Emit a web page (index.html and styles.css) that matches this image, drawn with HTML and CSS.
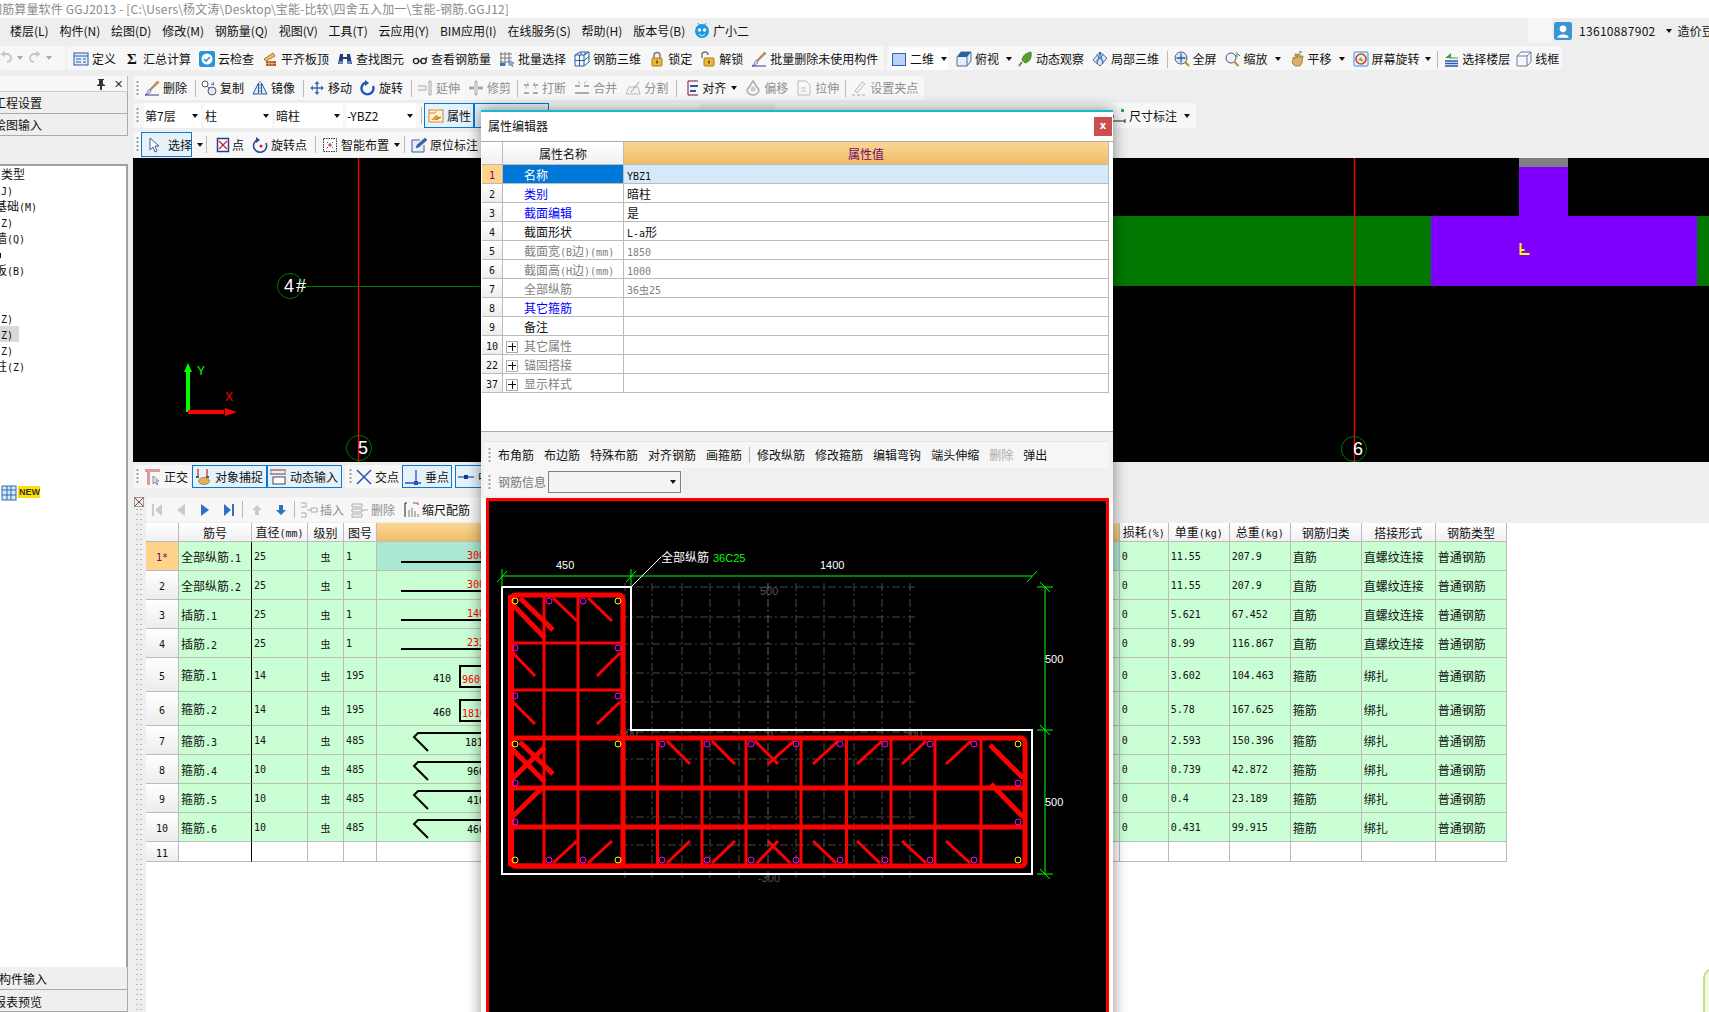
FILE: index.html
```html
<!DOCTYPE html>
<html lang="zh-CN">
<head>
<meta charset="utf-8">
<title>钢筋算量软件 GGJ2013</title>
<link rel="stylesheet" href="styles.css">
</head>
<body>
<svg class="defs" aria-hidden="true">
<symbol id="i-def" viewBox="0 0 16 16"><rect x="1" y="2" width="14" height="12" fill="#e3ecf8" stroke="#2b5c9e"/><path d="M1 5h14M3 8h5M3 11h5M10 8h3M10 11h3" stroke="#2b5c9e" fill="none"/></symbol>
<symbol id="i-cloud" viewBox="0 0 16 16"><rect x="0" y="0" width="16" height="16" rx="2" fill="#2a93dc"/><circle cx="8" cy="8" r="5.5" fill="#fff"/><path d="M5 8l2 2 4-4" stroke="#2a93dc" stroke-width="1.6" fill="none"/></symbol>
<symbol id="i-flat" viewBox="0 0 16 16"><path d="M2 8l9-6 2 3-9 5z" fill="#f3c93b" stroke="#555" stroke-width=".7"/><rect x="4" y="10" width="10" height="5" fill="#c0562a"/><path d="M4 12.5h10M7 10v5M10 10v5" stroke="#f3d4a0" stroke-width=".6"/></symbol>
<symbol id="i-bino" viewBox="0 0 16 16"><path d="M3 3h3v3h4V3h3l2 10h-5V8H6v5H1z" fill="#1f3f75"/><rect x="2" y="10" width="4" height="3" fill="#5d85bf"/><rect x="10" y="10" width="4" height="3" fill="#5d85bf"/></symbol>
<symbol id="i-glass" viewBox="0 0 16 16"><circle cx="4" cy="10" r="2.6" fill="none" stroke="#222" stroke-width="1.4"/><circle cx="11.5" cy="10" r="2.6" fill="none" stroke="#222" stroke-width="1.4"/><path d="M6.5 10h2.5M14 9l1-3" stroke="#222" fill="none"/></symbol>
<symbol id="i-bsel" viewBox="0 0 16 16"><path d="M2 1v14M6 1v14M10 1v11M1 3h12M1 7h12M1 11h9" stroke="#777" fill="none"/><rect x="1" y="12" width="5" height="3" fill="#3b74c4"/><path d="M10 9l5 3-2 1 1 2-1 .5-1-2-2 1z" fill="#8fb0da" stroke="#3b5f96" stroke-width=".5"/></symbol>
<symbol id="i-rebar" viewBox="0 0 16 16"><path d="M1 4l5-3h9v10l-5 4H1zM1 4h9v11M10 4l5-3M1 9.5h9M5.500 4v11M10 9.500l5-4M7 1v3M11 1v3" stroke="#2a5da8" fill="none"/></symbol>
<symbol id="i-lock" viewBox="0 0 16 16"><path d="M5 7V4.500a3 3 0 016 0V7" stroke="#777" stroke-width="1.500" fill="none"/><rect x="3" y="7" width="10" height="8" rx="1" fill="#e8b83a" stroke="#a87d14"/><rect x="7" y="9.500" width="2" height="3" fill="#7a5b10"/></symbol>
<symbol id="i-unlock" viewBox="0 0 16 16"><path d="M2 7V4a3 3 0 016 0" stroke="#777" stroke-width="1.500" fill="none"/><rect x="4" y="7" width="10" height="8" rx="1" fill="#e8b83a" stroke="#a87d14"/><rect x="8" y="9.500" width="2" height="3" fill="#7a5b10"/></symbol>
<symbol id="i-broom" viewBox="0 0 16 16"><path d="M13.500 1L15 2.500 7 10 6 9z" fill="#c99645" stroke="#7a5a20" stroke-width=".5"/><path d="M6 9l1 1.500C6.500 13 4 15 1 15c2-1 2.500-3 3-4.500z" fill="#d9d4ee" stroke="#5a4fa8" stroke-width=".7"/><path d="M1 15h14" stroke="#3a3a8a"/></symbol>
<symbol id="i-copy" viewBox="0 0 16 16"><circle cx="4" cy="4" r="3" fill="#fff" stroke="#556"/><circle cx="11" cy="11" r="4" fill="#dfe8f5" stroke="#556"/><path d="M6 6l3 3M12 2l1 3-3-1" stroke="#3b74c4" fill="none"/></symbol>
<symbol id="i-mirror" viewBox="0 0 16 16"><path d="M8 1v14" stroke="#3b74c4" stroke-dasharray="2 1"/><path d="M6.500 3v11H1zM9.500 3v11H15z" fill="#dfe8f5" stroke="#2b5c9e"/></symbol>
<symbol id="i-move" viewBox="0 0 16 16"><path d="M8 1l2.500 3h-1.800v3.300H12V5.500L15 8l-3 2.500V8.700H8.700V12h1.800L8 15l-2.500-3h1.800V8.700H4v1.800L1 8l3-2.500v1.800h3.300V4H5.500z" fill="#356cb8"/></symbol>
<symbol id="i-rot" viewBox="0 0 16 16"><path d="M6 2.500A6 6 0 1013 6" stroke="#2456b8" stroke-width="2.400" fill="none"/><path d="M5 0v6l4-3z" fill="#2456b8"/></symbol>
<symbol id="i-ext" viewBox="0 0 16 16"><path d="M1 6h8v4H1M12 1h2v14h-2z" stroke="#aaa" fill="#f3f3f3"/></symbol>
<symbol id="i-trim" viewBox="0 0 16 16"><path d="M1 8h5M10 8h5" stroke="#aaa" stroke-width="3"/><path d="M7 1h2v14H7z" stroke="#aaa" fill="#f3f3f3"/></symbol>
<symbol id="i-brk" viewBox="0 0 16 16"><path d="M1 13h5M10 13h5M1 5h5M10 5h5" stroke="#aaa" stroke-width="2"/><path d="M5 2L3 9M11 2l2 7" stroke="#bbb"/></symbol>
<symbol id="i-mrg" viewBox="0 0 16 16"><path d="M1 13h14M1 6h5M10 6h5" stroke="#aaa" stroke-width="2"/><path d="M4 1l2 3M12 1l-2 3" stroke="#bbb"/></symbol>
<symbol id="i-spl" viewBox="0 0 16 16"><path d="M1 14h14L13 7H4z" fill="#f3f3f3" stroke="#bbb"/><path d="M6 12l8-10" stroke="#999"/></symbol>
<symbol id="i-align" viewBox="0 0 16 16"><path d="M3 1v14M3 15h10M3 1h10" stroke="#7a1030" fill="none"/><path d="M5 5h8v2H5zM5 10h6v2H5z" fill="#2456b8"/></symbol>
<symbol id="i-off" viewBox="0 0 16 16"><path d="M8 1l6 9a6 5 0 01-12 0z" fill="none" stroke="#aaa" stroke-width="1.500"/><circle cx="8" cy="9" r="2.500" fill="#ccc"/></symbol>
<symbol id="i-str" viewBox="0 0 16 16"><path d="M2 1h8l4 4v10H2z" fill="#f8f8f8" stroke="#bbb"/><path d="M5 8h5M5 11h5" stroke="#bbb"/></symbol>
<symbol id="i-grip" viewBox="0 0 16 16"><path d="M1 15h3M6 15h3M11 15h3" stroke="#aaa"/><path d="M4 11L11 2l3 2-8 9z" fill="#f2f2f2" stroke="#bbb"/></symbol>
<symbol id="i-attr" viewBox="0 0 16 16"><rect x="1" y="2" width="14" height="12" fill="#fff4d8" stroke="#d8862a"/><path d="M1 5h6l1-2" stroke="#d8862a" fill="none"/><path d="M3 12l5-5 4 2-5 3z" fill="#d8a028"/><path d="M8 12l5-3" stroke="#8b5a10"/></symbol>
<symbol id="i-cur" viewBox="0 0 16 16"><path d="M4 1v12l3-3 2 5 2-1-2-5h4z" fill="#fff" stroke="#3b5f96"/></symbol>
<symbol id="i-pt" viewBox="0 0 16 16"><rect x="2.500" y="1.500" width="11" height="13" fill="#fff" stroke="#243f9a" stroke-width="1.500"/><path d="M4 4l8 8M12 4l-8 8" stroke="#c8242c" stroke-width="1.300"/></symbol>
<symbol id="i-rpt" viewBox="0 0 16 16"><path d="M5 3a6.500 6.500 0 109 3" stroke="#2b4c96" stroke-width="1.600" fill="none"/><path d="M4 0v6l4-3z" fill="#2b4c96"/><circle cx="9" cy="9" r="1.500" fill="#c8242c"/></symbol>
<symbol id="i-smart" viewBox="0 0 16 16"><rect x="1.500" y="1.500" width="13" height="13" fill="#fff" stroke="#333" stroke-dasharray="1.500 1"/><path d="M5 5h1v1H5zM10 5h1v1h-1zM5 10h1v1H5zM10 10h1v1h-1z" fill="#2456b8"/><path d="M8 6v4M6 8h4" stroke="#c8242c"/></symbol>
<symbol id="i-pen" viewBox="0 0 16 16"><path d="M1 15V3h8M1 15h12V8" stroke="#3b5f96" fill="#e8eef8"/><path d="M5 11l1-3 8-7 2 2-8 7z" fill="#3566ae" stroke="#1f3f75" stroke-width=".5"/></symbol>
<symbol id="i-2d" viewBox="0 0 16 16"><rect x="1.500" y="2.500" width="13" height="12" fill="#b9d3f4" stroke="#2f62b0"/></symbol>
<symbol id="i-top" viewBox="0 0 16 16"><path d="M1 6l4-5h10v9l-4 5H1z" fill="#e6eef8" stroke="#4a6c9e"/><path d="M1 6h10l4-5H5z" fill="#2e5f9e"/><path d="M11 6v9" stroke="#4a6c9e"/></symbol>
<symbol id="i-orb" viewBox="0 0 16 16"><path d="M14 1c1 5-1 10-6 11L5 9c1-5 4-7 9-8z" fill="#4fa62a" stroke="#2b6b12" stroke-width=".7"/><path d="M5 11l-3 4" stroke="#777" stroke-width="2"/></symbol>
<symbol id="i-local" viewBox="0 0 16 16"><path d="M8 1l7 6-7 8-7-6zM4.500 4l7 6.500M11.500 3.500L4 10.500M8 1L5 13M8 1l3 12" stroke="#2f62b0" fill="#dce7f6" stroke-width=".9"/></symbol>
<symbol id="i-full" viewBox="0 0 16 16"><circle cx="7" cy="7" r="6" fill="#dfe8f5" stroke="#556"/><path d="M7 2.500V11.500M2.500 7H11.500" stroke="#2456b8" stroke-width="1.300"/><path d="M11 11l4 4" stroke="#c08a20" stroke-width="2"/></symbol>
<symbol id="i-zoom" viewBox="0 0 16 16"><circle cx="6" cy="7" r="5" fill="#eef3fa" stroke="#556"/><path d="M9.500 11l4 4" stroke="#c08a20" stroke-width="2"/><path d="M12 1v5M13 3l2 2" stroke="#3a7a3a"/></symbol>
<symbol id="i-pan" viewBox="0 0 16 16"><path d="M4 8V6l2 2V3h2v4l1-4h2v4l1-2h2l-1 7-2 3H6L3 12z" fill="#d9b26a" stroke="#8b6a25" stroke-width=".7"/><path d="M10 1h3" stroke="#2456b8"/></symbol>
<symbol id="i-srot" viewBox="0 0 16 16"><rect x="1" y="1" width="14" height="14" rx="1" fill="#eef3fa" stroke="#2a93dc"/><circle cx="8" cy="8" r="5" fill="none" stroke="#d83a2a" stroke-width="1.600"/><path d="M5 9l3-3 3 5z" fill="#7cb342"/></symbol>
<symbol id="i-floor" viewBox="0 0 16 16"><path d="M2 7l6-5v5z" fill="#3aa14a"/><path d="M6 7h9" stroke="#3aa14a"/><path d="M2 10h13M2 12.500h13M2 15h13" stroke="#2456b8" stroke-width="1.300"/></symbol>
<symbol id="i-wire" viewBox="0 0 16 16"><path d="M1 5l4-4h10v10l-4 4H1zM1 5h10v10M11 5l4-4" stroke="#6a7d99" fill="#f4f7fb"/></symbol>
<symbol id="i-dim" viewBox="0 0 16 16"><path d="M1 13h14M1 11v4M15 11v4" stroke="#222" fill="none"/><rect x="11" y="1" width="3" height="3" fill="#3aa14a"/><rect x="1" y="7" width="3" height="3" fill="#3aa14a"/></symbol>
<symbol id="i-ortho" viewBox="0 0 16 16"><path d="M0 0h15v3H5v13H2V3H0z" fill="#dd9c9c"/><path d="M8 7v8l2-2 2 3 1-1-2-3h3z" fill="#dfe8f5" stroke="#5a6a80" stroke-width=".7"/></symbol>
<symbol id="i-snap" viewBox="0 0 16 16"><path d="M3 0v7M12 0v7" stroke="#c0392b" stroke-width="1.300"/><path d="M1 8h3M11 8h3" stroke="#555" stroke-width="2"/><ellipse cx="9" cy="12" rx="5.500" ry="3.500" fill="#dcb25a" stroke="#946f20" stroke-width=".7"/></symbol>
<symbol id="i-dyn" viewBox="0 0 16 16"><path d="M0 1h16M0 5h16" stroke="#8a3030" fill="none"/><path d="M1 1v4M15 1v4" stroke="#999"/><rect x="3" y="8" width="12" height="7" fill="#fff" stroke="#444"/></symbol>
<symbol id="i-cross" viewBox="0 0 16 16"><path d="M1 1l14 14M15 1L1 15" stroke="#2456b8" stroke-width="1.500"/></symbol>
<symbol id="i-perp" viewBox="0 0 16 16"><path d="M0 14h16M11 1v13" stroke="#2456b8" stroke-width="1.300"/><rect x="9" y="12" width="4" height="4" fill="#2456b8"/></symbol>
<symbol id="i-mid" viewBox="0 0 16 16"><path d="M0 8h16" stroke="#2456b8" stroke-width="1.300"/><rect x="6" y="6" width="4" height="4" fill="#123a8a"/></symbol>
<symbol id="i-first" viewBox="0 0 14 16"><path d="M2 2h2v12H2zM12 2v12L5 8z" fill="#c8ccd2"/></symbol>
<symbol id="i-prev" viewBox="0 0 14 16"><path d="M11 2v12L3 8z" fill="#c8ccd2"/></symbol>
<symbol id="i-next" viewBox="0 0 14 16"><path d="M3 2v12l8-6z" fill="#2f6fc4"/></symbol>
<symbol id="i-last" viewBox="0 0 14 16"><path d="M10 2h2v12h-2zM2 2v12l7-6z" fill="#2f6fc4"/></symbol>
<symbol id="i-up" viewBox="0 0 14 16"><path d="M7 3l5 5H9v5H5V8H2z" fill="#c8ccd2"/></symbol>
<symbol id="i-down" viewBox="0 0 14 16"><path d="M5 3h4v5h3l-5 5-5-5h3z" fill="#2f6fc4"/></symbol>
<symbol id="i-ins" viewBox="0 0 18 16"><path d="M1 1h5v4H1M1 11h5v4H1M7 8h4M11 6v4h6V6z" stroke="#aaa" fill="none"/></symbol>
<symbol id="i-del" viewBox="0 0 18 16"><path d="M1 2h10v3H1zM1 7h10v3H1zM1 12h10v3H1z" stroke="#aaa" fill="#f4f4f4"/><path d="M12 8h5" stroke="#aaa"/></symbol>
<symbol id="i-scale" viewBox="0 0 16 16"><path d="M1 1h2M1 1v14" stroke="#222" fill="none"/><path d="M9 1h5v2" stroke="#c0392b" fill="none"/><path d="M5 15V8M8 15V6M11 15V9M14 15v-3" stroke="#777"/></symbol>
<symbol id="i-grid" viewBox="0 0 16 16"><rect x="1" y="1" width="14" height="14" fill="#d8e8fa" stroke="#2b6cb0"/><path d="M6 1v14M10 1v14M1 5h14M1 10h14" stroke="#2b6cb0" fill="none"/></symbol>
<symbol id="i-user" viewBox="0 0 16 16"><rect width="16" height="16" rx="2" fill="#3a97d4"/><circle cx="8" cy="6" r="3" fill="#fff"/><path d="M3 14c0-4 10-4 10 0z" fill="#fff"/></symbol>
<symbol id="i-bot" viewBox="0 0 18 18"><circle cx="9" cy="9" r="7" fill="#1d9ae0"/><circle cx="6.500" cy="8" r="1.700" fill="#fff"/><circle cx="11.500" cy="8" r="1.700" fill="#fff"/><path d="M6 12c2 2 4 2 6 0" stroke="#fff" fill="none"/><path d="M5 1l2 3M13 1l-2 3" stroke="#1d9ae0"/></symbol>
<symbol id="i-undo" viewBox="0 0 12 16"><path d="M3 4h4a3 3 0 010 8" stroke="#c8c8c8" stroke-width="2" fill="none"/><path d="M5 1v6L0 4z" fill="#c8c8c8"/></symbol>
<symbol id="i-redo" viewBox="0 0 12 16"><path d="M9 4H5a3 3 0 000 8" stroke="#c8c8c8" stroke-width="2" fill="none"/><path d="M7 1v6l5-3z" fill="#c8c8c8"/></symbol>
<symbol id="i-pin" viewBox="0 0 10 12"><path d="M2 1h6v1H7v4l2 1v1H6v4H4V8H1V7l2-1V2H2z" fill="#333"/></symbol>
</svg>

<header class="titlebar"><span class="titletext">钢筋算量软件 GGJ2013 - [C:\Users\杨文涛\Desktop\宝能-比较\四舍五入加一\宝能-钢筋.GGJ12]</span></header>

<nav class="menubar">
  <span class="menuitem">楼层(L)</span><span class="menuitem">构件(N)</span><span class="menuitem">绘图(D)</span><span class="menuitem">修改(M)</span><span class="menuitem">钢筋量(Q)</span><span class="menuitem">视图(V)</span><span class="menuitem">工具(T)</span><span class="menuitem">云应用(Y)</span><span class="menuitem">BIM应用(I)</span><span class="menuitem">在线服务(S)</span><span class="menuitem">帮助(H)</span><span class="menuitem">版本号(B)</span>
  <span class="menuitem assistant"><svg class="ic18"><use href="#i-bot"/></svg>广小二</span>
  <span class="menuright"><span class="lightbox"></span><svg class="ic18"><use href="#i-user"/></svg><span class="phone">13610887902</span><i class="caret"></i><span class="beans">造价豆</span></span>
</nav>

<div class="row1">
  <div class="group g-undo"><svg class="ic12"><use href="#i-undo"/></svg><i class="caret pale"></i><svg class="ic12"><use href="#i-redo"/></svg><i class="caret pale"></i></div>
  <div class="group g-main">
    <span class="tb"><svg class="ic"><use href="#i-def"/></svg>定义</span>
    <span class="tb"><b class="sigma">Σ</b>汇总计算</span>
    <span class="tb"><svg class="ic"><use href="#i-cloud"/></svg>云检查</span>
    <span class="tb"><svg class="ic"><use href="#i-flat"/></svg>平齐板顶</span>
    <span class="tb"><svg class="ic"><use href="#i-bino"/></svg>查找图元</span>
    <span class="tb"><svg class="ic"><use href="#i-glass"/></svg>查看钢筋量</span>
    <span class="tb"><svg class="ic"><use href="#i-bsel"/></svg>批量选择</span>
    <span class="tb"><svg class="ic"><use href="#i-rebar"/></svg>钢筋三维</span>
    <span class="tb"><svg class="ic"><use href="#i-lock"/></svg>锁定</span>
    <span class="tb"><svg class="ic"><use href="#i-unlock"/></svg>解锁</span>
    <span class="tb"><svg class="ic"><use href="#i-broom"/></svg>批量删除未使用构件</span>
  </div>
  <div class="group g-view">
    <span class="tb tb-2d"><svg class="ic"><use href="#i-2d"/></svg>二维<i class="caret"></i></span>
    <span class="tb"><svg class="ic"><use href="#i-top"/></svg>俯视<i class="caret topview"></i></span>
    <span class="tb"><svg class="ic"><use href="#i-orb"/></svg>动态观察</span>
    <span class="tb"><svg class="ic"><use href="#i-local"/></svg>局部三维</span>
    <i class="sep"></i>
    <span class="tb"><svg class="ic"><use href="#i-full"/></svg>全屏</span>
    <span class="tb"><svg class="ic"><use href="#i-zoom"/></svg>缩放<i class="caret"></i></span>
    <span class="tb"><svg class="ic"><use href="#i-pan"/></svg>平移<i class="caret"></i></span>
    <span class="tb"><svg class="ic"><use href="#i-srot"/></svg>屏幕旋转<i class="caret near"></i></span>
    <i class="sep"></i>
    <span class="tb"><svg class="ic"><use href="#i-floor"/></svg>选择楼层</span>
    <span class="tb tb-wire"><svg class="ic"><use href="#i-wire"/></svg>线框</span>
  </div>
</div>

<div class="work">
  <aside class="left">
    <div class="paneltop"><svg class="pin"><use href="#i-pin"/></svg><span class="paneclose">✕</span></div>
    <div class="leftbtn"><span class="clip6">工程设置</span></div>
    <div class="leftbtn"><span class="clip6">绘图输入</span></div>
    <div class="tree">
      <div class="node first">类型</div>
      <div class="node"><span class="m">(J)</span></div>
      <div class="node">基础<span class="m">(M)</span></div>
      <div class="node"><span class="m">(Z)</span></div>
      <div class="node">墙<span class="m">(Q)</span></div>
      <div class="node"><i class="tick"></i></div>
      <div class="node">板<span class="m">(B)</span></div>
      <div class="node"></div>
      <div class="node"></div>
      <div class="node"><span class="m">(Z)</span></div>
      <div class="node active"><span class="m">(Z)</span></div>
      <div class="node"><span class="m">(Z)</span></div>
      <div class="node">柱<span class="m">(Z)</span></div>
      <div class="newrow"><svg class="ic"><use href="#i-grid"/></svg><span class="newtag">NEW</span></div>
    </div>
    <div class="leftbtn foot"><span class="clip1">构件输入</span></div>
    <div class="leftbtn foot"><span class="clip6">报表预览</span></div>
  </aside>

  <main class="right">
    <div class="row2"><div class="group g-edit">
      <i class="grip"></i>
      <span class="tb"><svg class="ic"><use href="#i-broom"/></svg>删除</span><i class="sep"></i>
      <span class="tb"><svg class="ic"><use href="#i-copy"/></svg>复制</span>
      <span class="tb"><svg class="ic"><use href="#i-mirror"/></svg>镜像</span><i class="sep"></i>
      <span class="tb"><svg class="ic"><use href="#i-move"/></svg>移动</span>
      <span class="tb"><svg class="ic"><use href="#i-rot"/></svg>旋转</span><i class="sep"></i>
      <span class="tb off"><svg class="ic"><use href="#i-ext"/></svg>延伸</span>
      <span class="tb off"><svg class="ic"><use href="#i-trim"/></svg>修剪</span><i class="sep tight"></i>
      <span class="tb off"><svg class="ic"><use href="#i-brk"/></svg>打断</span>
      <span class="tb off"><svg class="ic"><use href="#i-mrg"/></svg>合并</span>
      <span class="tb off"><svg class="ic"><use href="#i-spl"/></svg>分割</span><i class="sep"></i>
      <span class="tb gap-align"><svg class="ic"><use href="#i-align"/></svg>对齐<i class="caret"></i></span>
      <span class="tb off"><svg class="ic"><use href="#i-off"/></svg>偏移</span>
      <span class="tb off"><svg class="ic"><use href="#i-str"/></svg>拉伸</span><i class="sep tight"></i>
      <span class="tb off"><svg class="ic"><use href="#i-grip"/></svg>设置夹点</span>
    </div></div>

    <div class="row3">
      <div class="group g-combo">
        <i class="grip"></i>
        <span class="combo c1">第7层<i class="caret"></i></span>
        <span class="combo c2">柱<i class="caret"></i></span>
        <span class="combo c2">暗柱<i class="caret"></i></span>
        <span class="combo c3">-YBZ2<i class="caret"></i></span>
        <i class="sep"></i>
        <span class="tbtn"><svg class="ic"><use href="#i-attr"/></svg>属性</span>
        <span class="tbtn wide"></span>
      </div>
      <div class="group g-dim"><span class="tb"><svg class="ic"><use href="#i-dim"/></svg>尺寸标注<i class="caret"></i></span></div>
    </div>

    <div class="row4"><div class="group g-place">
      <i class="grip"></i>
      <span class="tbtn sel"><svg class="ic"><use href="#i-cur"/></svg>选择</span><i class="caret solo"></i><i class="sep"></i>
      <span class="tb tb-pt"><svg class="ic"><use href="#i-pt"/></svg>点</span>
      <span class="tb"><svg class="ic"><use href="#i-rpt"/></svg>旋转点</span><i class="sep"></i>
      <span class="tb"><svg class="ic"><use href="#i-smart"/></svg>智能布置<i class="caret smart"></i></span><i class="sep"></i>
      <span class="tb"><svg class="ic"><use href="#i-pen"/></svg>原位标注</span>
    </div></div>

    <svg class="cad" viewBox="133 158 1576 304">
      <rect x="133" y="158" width="1576" height="304" fill="#000"/>
      <rect x="1100" y="216" width="609" height="70" fill="#007800"/>
      <rect x="1431" y="216" width="266" height="70" fill="#8000ff"/>
      <rect x="1519" y="167" width="49" height="49" fill="#8000ff"/>
      <rect x="1519" y="158" width="49" height="9" fill="#808080"/>
      <path d="M1520.500 243v11h9M1520.500 250h4" stroke="#ff0" stroke-width="2" fill="none"/>
      <path d="M302 286.500H1100" stroke="#007800"/>
      <path d="M358.500 158V462M1354.500 158V462" stroke="#f00" stroke-width="1.300"/>
      <circle cx="290" cy="286" r="12.500" fill="none" stroke="#007800"/>
      <circle cx="359" cy="448" r="12.500" fill="none" stroke="#007800"/>
      <circle cx="1354" cy="449" r="12.500" fill="none" stroke="#007800"/>
      <text class="axisnum" x="284" y="292">4</text><text class="axisnum" x="296" y="292">#</text>
      <text class="axisnum" x="358" y="454">5</text>
      <text class="axisnum" x="1353" y="455">6</text>
      <path d="M188 412V368" stroke="#0f0" stroke-width="4"/><path d="M188 363l4 9h-8z" fill="#0f0"/>
      <path d="M188 412h36" stroke="#f00" stroke-width="4"/><path d="M237 412l-12-4v8z" fill="#f00"/>
      <text class="axislabel" x="197" y="375" fill="#0f0">Y</text>
      <text class="axislabel" x="225" y="401" fill="#f00">X</text>
    </svg>

    <div class="statusrow">
      <div class="group g-s1">
        <i class="grip"></i>
        <span class="tb"><svg class="ic"><use href="#i-ortho"/></svg>正交</span>
        <span class="tbtn on"><svg class="ic"><use href="#i-snap"/></svg>对象捕捉</span>
        <span class="tbtn on"><svg class="ic"><use href="#i-dyn"/></svg>动态输入</span>
      </div>
      <div class="group g-s2">
        <i class="grip"></i>
        <span class="tb"><svg class="ic"><use href="#i-cross"/></svg>交点</span>
        <span class="tbtn on"><svg class="ic"><use href="#i-perp"/></svg>垂点</span>
        <span class="tbtn on"><svg class="ic"><use href="#i-mid"/></svg>中点</span>
      </div>
    </div>

    <div class="lower">
      <div class="gutter"><svg class="gutter-ic" viewBox="0 0 10 10"><rect width="10" height="10" fill="#eee" stroke="#8a3030"/><path d="M1 1l8 8M9 1L1 9" stroke="#555"/></svg><div class="dots"></div></div>
      <div class="lowermain">
        <div class="navrow"><div class="group g-nav">
          <svg class="ic14"><use href="#i-first"/></svg><svg class="ic14"><use href="#i-prev"/></svg><svg class="ic14"><use href="#i-next"/></svg><svg class="ic14"><use href="#i-last"/></svg>
          <i class="sep"></i>
          <svg class="ic14"><use href="#i-up"/></svg><svg class="ic14"><use href="#i-down"/></svg>
          <i class="sep"></i>
          <span class="tb off tb-ins"><svg class="ic18"><use href="#i-ins"/></svg>插入</span>
          <span class="tb off"><svg class="ic18"><use href="#i-del"/></svg>删除</span>
          <span class="tb tb-scale"><svg class="ic"><use href="#i-scale"/></svg>缩尺配筋</span>
        </div></div>
        <div class="tablearea">
          <table class="rebar">
            <colgroup><col class="w33"><col class="w73"><col class="w56"><col class="w36"><col class="w33"><col class="w742"><col class="w49"><col class="w61"><col class="w61"><col class="w71"><col class="w74"><col class="w71"></colgroup>
            <thead><tr class="hh"><th></th><th>筋号</th><th>直径<span class="m">(mm)</span></th><th>级别</th><th>图号</th><th class="hot">图形</th><th>损耗<span class="m">(%)</span></th><th>单重<span class="m">(kg)</span></th><th>总重<span class="m">(kg)</span></th><th>钢筋归类</th><th>搭接形式</th><th>钢筋类型</th></tr></thead>
            <tbody>
              <tr class="r29"><td class="no cur"><span class="m">1*</span></td><td class="bar">全部纵筋<span class="m">.1</span></td><td class="m">25</td><td class="c">虫</td><td class="m">1</td><td class="gr sel"><svg class="shape"><path class="sl" d="M24 20H104"/><text class="rt" x="90" y="17">3000</text></svg></td><td class="m">0</td><td class="m">11.55</td><td class="m">207.9</td><td>直筋</td><td>直螺纹连接</td><td>普通钢筋</td></tr>
              <tr class="r29"><td class="no"><span class="m">2</span></td><td class="bar">全部纵筋<span class="m">.2</span></td><td class="m">25</td><td class="c">虫</td><td class="m">1</td><td class="gr"><svg class="shape"><path class="sl" d="M24 20H104"/><text class="rt" x="90" y="17">3000</text></svg></td><td class="m">0</td><td class="m">11.55</td><td class="m">207.9</td><td>直筋</td><td>直螺纹连接</td><td>普通钢筋</td></tr>
              <tr class="r29"><td class="no"><span class="m">3</span></td><td class="bar">插筋<span class="m">.1</span></td><td class="m">25</td><td class="c">虫</td><td class="m">1</td><td class="gr"><svg class="shape"><path class="sl" d="M24 20H104"/><text class="rt" x="90" y="17">1400</text></svg></td><td class="m">0</td><td class="m">5.621</td><td class="m">67.452</td><td>直筋</td><td>直螺纹连接</td><td>普通钢筋</td></tr>
              <tr class="r29"><td class="no"><span class="m">4</span></td><td class="bar">插筋<span class="m">.2</span></td><td class="m">25</td><td class="c">虫</td><td class="m">1</td><td class="gr"><svg class="shape"><path class="sl" d="M24 20H104"/><text class="rt" x="90" y="17">2335</text></svg></td><td class="m">0</td><td class="m">8.99</td><td class="m">116.867</td><td>直筋</td><td>直螺纹连接</td><td>普通钢筋</td></tr>
              <tr class="r34"><td class="no"><span class="m">5</span></td><td class="bar">箍筋<span class="m">.1</span></td><td class="m">14</td><td class="c">虫</td><td class="m">195</td><td class="gr"><svg class="shape"><text class="bt" x="56" y="24">410</text><path class="sl" d="M110 8H83V29H110"/><text class="rt" x="85" y="25">960</text></svg></td><td class="m">0</td><td class="m">3.602</td><td class="m">104.463</td><td>箍筋</td><td>绑扎</td><td>普通钢筋</td></tr>
              <tr class="r34"><td class="no"><span class="m">6</span></td><td class="bar">箍筋<span class="m">.2</span></td><td class="m">14</td><td class="c">虫</td><td class="m">195</td><td class="gr"><svg class="shape"><text class="bt" x="56" y="24">460</text><path class="sl" d="M110 8H83V29H110"/><text class="rt" x="85" y="25">1810</text></svg></td><td class="m">0</td><td class="m">5.78</td><td class="m">167.625</td><td>箍筋</td><td>绑扎</td><td>普通钢筋</td></tr>
              <tr class="r29"><td class="no"><span class="m">7</span></td><td class="bar">箍筋<span class="m">.3</span></td><td class="m">14</td><td class="c">虫</td><td class="m">485</td><td class="gr"><svg class="shape"><path class="sl" d="M51 25L37 11 41 7H104"/><text class="bt" x="88" y="20">1810</text></svg></td><td class="m">0</td><td class="m">2.593</td><td class="m">150.396</td><td>箍筋</td><td>绑扎</td><td>普通钢筋</td></tr>
              <tr class="r29"><td class="no"><span class="m">8</span></td><td class="bar">箍筋<span class="m">.4</span></td><td class="m">10</td><td class="c">虫</td><td class="m">485</td><td class="gr"><svg class="shape"><path class="sl" d="M51 25L37 11 41 7H104"/><text class="bt" x="90" y="20">960</text></svg></td><td class="m">0</td><td class="m">0.739</td><td class="m">42.872</td><td>箍筋</td><td>绑扎</td><td>普通钢筋</td></tr>
              <tr class="r29"><td class="no"><span class="m">9</span></td><td class="bar">箍筋<span class="m">.5</span></td><td class="m">10</td><td class="c">虫</td><td class="m">485</td><td class="gr"><svg class="shape"><path class="sl" d="M51 25L37 11 41 7H104"/><text class="bt" x="90" y="20">410</text></svg></td><td class="m">0</td><td class="m">0.4</td><td class="m">23.189</td><td>箍筋</td><td>绑扎</td><td>普通钢筋</td></tr>
              <tr class="r29"><td class="no"><span class="m">10</span></td><td class="bar">箍筋<span class="m">.6</span></td><td class="m">10</td><td class="c">虫</td><td class="m">485</td><td class="gr"><svg class="shape"><path class="sl" d="M51 25L37 11 41 7H104"/><text class="bt" x="90" y="20">460</text></svg></td><td class="m">0</td><td class="m">0.431</td><td class="m">99.915</td><td>箍筋</td><td>绑扎</td><td>普通钢筋</td></tr>
              <tr class="r20 empty"><td class="no"><span class="m">11</span></td><td class="bar"></td><td></td><td></td><td></td><td></td><td></td><td></td><td></td><td></td><td></td><td></td></tr>
            </tbody>
          </table>
          <i class="cornerarc"></i>
        </div>
      </div>
    </div>
  </main>
</div>

<section class="dialog">
  <div class="dlghead"><span>属性编辑器</span><span class="dlgclose">x</span></div>
  <table class="props">
    <colgroup><col class="p1"><col class="p2"><col class="p3"></colgroup>
    <thead><tr><th></th><th>属性名称</th><th class="hot">属性值</th></tr></thead>
    <tbody>
      <tr class="cur"><td class="no cur"><span class="m">1</span></td><td class="lab selname">名称</td><td class="val"><span class="m">YBZ1</span></td></tr>
      <tr><td class="no"><span class="m">2</span></td><td class="lab blue">类别</td><td class="val">暗柱</td></tr>
      <tr><td class="no"><span class="m">3</span></td><td class="lab blue">截面编辑</td><td class="val">是</td></tr>
      <tr><td class="no"><span class="m">4</span></td><td class="lab">截面形状</td><td class="val"><span class="m">L-a</span>形</td></tr>
      <tr><td class="no"><span class="m">5</span></td><td class="lab gray">截面宽<span class="m">(B</span>边<span class="m">)(mm)</span></td><td class="val gray"><span class="m">1850</span></td></tr>
      <tr><td class="no"><span class="m">6</span></td><td class="lab gray">截面高<span class="m">(H</span>边<span class="m">)(mm)</span></td><td class="val gray"><span class="m">1000</span></td></tr>
      <tr><td class="no"><span class="m">7</span></td><td class="lab gray">全部纵筋</td><td class="val gray"><span class="m">36</span><span class="glyph">虫</span><span class="m">25</span></td></tr>
      <tr><td class="no"><span class="m">8</span></td><td class="lab blue">其它箍筋</td><td class="val"></td></tr>
      <tr><td class="no"><span class="m">9</span></td><td class="lab">备注</td><td class="val"></td></tr>
      <tr><td class="no"><span class="m">10</span></td><td class="lab gray tree-l"><i class="plus"></i>其它属性</td><td class="val"></td></tr>
      <tr><td class="no"><span class="m">22</span></td><td class="lab gray tree-l"><i class="plus"></i>锚固搭接</td><td class="val"></td></tr>
      <tr><td class="no"><span class="m">37</span></td><td class="lab gray tree-l"><i class="plus"></i>显示样式</td><td class="val"></td></tr>
    </tbody>
  </table>
  <div class="dlgspace"></div>
  <div class="dlgtools">
    <div class="dlgbar"><i class="grip"></i><span class="dt first">布角筋</span><span class="dt">布边筋</span><span class="dt">特殊布筋</span><span class="dt">对齐钢筋</span><span class="dt">画箍筋</span><i class="sep flat"></i><span class="dt">修改纵筋</span><span class="dt">修改箍筋</span><span class="dt">编辑弯钩</span><span class="dt">端头伸缩</span><span class="dt dis">删除</span><span class="dt">弹出</span></div>
    <div class="dlginfo"><i class="grip"></i><span class="infolab">钢筋信息</span><span class="infobox"><i class="caret"></i></span></div>
  </div>
  <div class="sectionview">
    <svg class="section" viewBox="489 501 616 511">
      <rect x="489" y="501" width="616" height="511" fill="#000"/>
      <path class="gridl" d="M625 583V878M652 583V878M682 583V878M710 583V878M739 583V878M796 583V878M824 583V878M854 583V878M882 583V878M910 583V878M620 587H915M620 617H915M620 644H915M620 673H915M620 702H915M620 732H915M620 759H915M620 788H915M620 817H915M620 845H915"/>
      <path class="gridc" d="M768 583V878"/>
      <text class="gridt" x="760" y="595">500</text><text class="gridt" x="758" y="882">-300</text><text class="gridt" x="616" y="737">-500</text><text class="gridt" x="767" y="737">0</text><text class="gridt" x="904" y="737">500</text>
      <path class="r3" d="M544 595V866M578 595V866M512 643H623M512 690H623M657.500 738V866M702 738V866M746 738V866M801 738V866M846.500 738V866M891 738V866M935 738V866M981 738V866"/>
      <rect class="r5" x="511" y="595" width="112" height="271" rx="4"/>
      <rect class="r5" x="511" y="738" width="514" height="128" rx="4"/>
      <path class="r6" d="M511 595V866"/>
      <path class="r5" d="M511 788H1023M511 827H1023"/>
      <path class="r3" d="M553 598L577 621M588 598L612 621M513 653L535 676M620 653L597 676M513 702L535 724M620 702L597 724M553 863L577 841M588 863L612 841M667 863L690 841M712 863L735 841M757 863L778 841M768 841L790 863M813 841L836 863M857 841L880 863M902 841L926 863M946 841L970 863M667 741L690 764M712 741L735 764M755 741L778 764M794 741L768 764M838 741L813 764M882 741L857 764M926 741L902 764M971 741L946 764"/>
      <path class="r5" d="M520 598L553 630M513 605L545 638M520 742L553 774M513 750L545 782M513 778L545 747M512 817L543 787M990 745L1023 778M991 784L1023 817"/>
      <path class="whiteoutline" d="M502 587H631V730H1032V874H502Z"/>
      <g class="dots-y"><circle cx="515" cy="601" r="3"/><circle cx="618" cy="601" r="3"/><circle cx="515" cy="744" r="3"/><circle cx="618" cy="744" r="3"/><circle cx="1018" cy="744" r="3"/><circle cx="515" cy="860" r="3"/><circle cx="618" cy="860" r="3"/><circle cx="1018" cy="860" r="3"/></g>
      <g class="dots-m"><circle cx="549" cy="601" r="3"/><circle cx="583" cy="601" r="3"/><circle cx="515" cy="648" r="3"/><circle cx="618" cy="648" r="3"/><circle cx="515" cy="696" r="3"/><circle cx="618" cy="696" r="3"/><circle cx="662" cy="744" r="3"/><circle cx="707" cy="744" r="3"/><circle cx="751" cy="744" r="3"/><circle cx="796" cy="744" r="3"/><circle cx="840" cy="744" r="3"/><circle cx="885" cy="744" r="3"/><circle cx="930" cy="744" r="3"/><circle cx="974" cy="744" r="3"/><circle cx="515" cy="783" r="3"/><circle cx="1018" cy="783" r="3"/><circle cx="515" cy="822" r="3"/><circle cx="1018" cy="822" r="3"/><circle cx="549" cy="860" r="3"/><circle cx="583" cy="860" r="3"/><circle cx="662" cy="860" r="3"/><circle cx="707" cy="860" r="3"/><circle cx="751" cy="860" r="3"/><circle cx="796" cy="860" r="3"/><circle cx="840" cy="860" r="3"/><circle cx="885" cy="860" r="3"/><circle cx="930" cy="860" r="3"/><circle cx="974" cy="860" r="3"/></g>
      <path class="dimg" d="M502 576H1032M502 569V587M631 569V587M497 582L507 571M626 582L636 571M1027 582L1037 571M1045 587V874M1037 587H1053M1037 730H1053M1037 874H1053M1040 582L1050 592M1040 725L1050 735M1040 869L1050 879"/>
      <path class="leader" d="M631 587L661 557"/>
      <text class="dimt" x="556" y="569">450</text><text class="dimt" x="820" y="569">1400</text>
      <text class="dimt" x="1045" y="663">500</text><text class="dimt" x="1045" y="806">500</text>
      <text class="dimcn" x="661" y="562">全部纵筋</text><text class="dimgreen" x="713" y="562">36C25</text>
    </svg>
  </div>
</section>
</body>
</html>
```
FILE: styles.css
```css
* { box-sizing: border-box; }
html, body { margin: 0; width: 1709px; height: 1012px; overflow: hidden; }
body {
  position: relative;
  background: #eeeeee;
  color: #111;
  font: 12px/1 "Noto Sans CJK SC", sans-serif;
}
i { font-style: normal; }
.defs { position: absolute; width: 0; height: 0; }
.m { font-family: "DejaVu Sans Mono", "Noto Sans CJK SC", monospace; font-size: 10px; }
.glyph { font-size: 10px; }

.ic, .ic12, .ic14, .ic18 { flex: none; display: block; }
.ic { width: 16px; height: 16px; }
.ic12 { width: 12px; height: 16px; }
.ic14 { width: 14px; height: 16px; }
.ic18 { width: 18px; height: 18px; }

.titlebar { height: 18px; background: #fff; overflow: hidden; line-height: 18px; }
.titletext { display: block; margin-left: -10px; font-size: 12px; color: #8a8a8a; white-space: nowrap; letter-spacing: .15px; }

.menubar { height: 28px; padding-left: 10px; display: flex; align-items: center; gap: 10.800px; padding-bottom: 3px; white-space: nowrap; }
.assistant { display: flex; align-items: center; gap: 2px; margin-left: -3px; }
.menuright { margin-left: auto; display: flex; align-items: center; width: 181px; }
.lightbox { width: 24px; height: 25px; background: #f6f6f6; margin-right: 2px; flex: none; }
.phone { margin-left: 7px; margin-right: 6px; letter-spacing: .3px; }
.beans { margin-left: 6px; }

.caret { display: block; flex: none; width: 0; height: 0; border-left: 3.5px solid transparent; border-right: 3.5px solid transparent; border-top: 4px solid #111; margin-left: 4px; }
.caret.pale { border-top-color: #aaa; margin: 0 6px 0 5px; }
.caret.near { margin: 0 -2px 0 2px; }
.caret.topview { margin-right: -3px; }
.caret.smart { margin: 0 -4px 0 2px; }

.group { display: flex; align-items: center; background: #f7f7f7; border-radius: 3px; gap: 8px; height: 100%; flex: none; }
.tb { display: flex; align-items: center; gap: 3px; white-space: nowrap; flex: none; }
.tb.off { color: #8f8f8f; }
.sep { display: block; flex: none; width: 1px; height: 17px; background: #b9b9b9; margin-right: -3px; }
.sep.tight { margin-left: -2px; }
.grip { display: block; flex: none; width: 3px; height: 17px; margin: 0 -3px 0 2px; background: radial-gradient(circle, #999 1px, transparent 1.2px) 0 0 / 3px 4px; }

.row1 { height: 24px; display: flex; }
.g-undo { width: 66px; gap: 0; }
.g-main { margin-left: 1px; padding: 2px 0 0 6px; width: 817px; }
.g-view { margin-left: 3px; width: 675px; padding: 2px 0 0 4px; }
.g-view .sep { margin-right: -2.500px; }
.tb-wire { margin-left: -2px; }
.sigma { width: 16px; text-align: center; font: bold 15px "Liberation Serif", serif; }
.tb-2d { background: #fff; height: 22px; }
.tb-2d .caret { margin-left: 4px; margin-right: 1px; }

.work { display: flex; height: 936px; margin-top: 6px; }
.left { width: 128px; flex: none; display: flex; flex-direction: column; }
.paneltop { height: 16px; background: #f7f7f7; display: flex; align-items: center; justify-content: flex-end; padding-right: 4px; gap: 8px; border-right: 1px solid #bbb; border-bottom: 1px solid #ccc; flex: none; }
.pin { width: 10px; height: 12px; }
.paneclose { font-size: 11px; color: #333; }
.leftbtn { height: 22px; flex: none; background: #efefef; border-bottom: 1px solid #aaa; border-right: 1px solid #aaa; display: flex; align-items: center; overflow: hidden; white-space: nowrap; padding-top: 1px; }
.leftbtn.foot { height: 22.500px; padding-top: 3px; }
.clip6 { margin-left: -6px; }
.clip1 { margin-left: -1px; }
.tree { margin-top: 28px; flex: 1; background: #fff; border-top: 2px solid #a0a0a0; border-right: 2px solid #a0a0a0; overflow: hidden; }
.node { height: 16px; line-height: 16px; margin-left: -5px; white-space: nowrap; }
.node.first { margin-left: 1px; }
.node.active { margin-left: 0; width: 19px; background: #d9d9d9; text-indent: -5px; }
.tick { display: inline-block; width: 1px; height: 5px; background: #111; margin-left: 5px; vertical-align: middle; }
.newrow { display: flex; gap: 1px; align-items: flex-start; margin: 111px 0 0 1px; }
.newtag { font: bold 9px "Liberation Sans", sans-serif; background: #ffe000; color: #333; padding: 1px; margin-top: 1px; width: 22px; }

.right { flex: 1; min-width: 0; display: flex; flex-direction: column; padding-left: 5px; }
.row2 { height: 24px; margin-left: 1px; }
.g-edit { width: 790px; }
.gap-align { gap: 1px; margin-left: 3px; }
.row3 { height: 25px; margin: 3px 0 0 1px; display: flex; }
.g-combo { width: 566px; gap: 3px; padding-right: 2px; }
.combo { display: flex; align-items: center; justify-content: space-between; height: 100%; background: #fff; padding: 0 3px 0 1px; flex: none; }
.c1 { width: 57px; margin-left: 5px; }
.c2 { width: 68px; }
.c3 { width: 70px; }
.g-combo .sep { margin: 0 2px; }
.tbtn { display: flex; align-items: center; gap: 3px; height: 100%; border: 1px solid #0a78d0; background: #e5f1fb; padding: 0 3px; flex: none; white-space: nowrap; }
.g-combo .tbtn { width: 50px; margin-left: -3px; }
.g-combo .tbtn.wide { width: 75px; margin-left: -3px; }
.g-dim { margin-left: 75px; width: 421px; justify-content: flex-end; padding-right: 6px; }
.row4 { height: 25px; margin: 4px 0 1px 1px; }
.g-place { width: 360px; }
.g-place .sep { margin-right: -2px; }
.g-place .sel { width: 51px; margin-left: -3px; padding-left: 4px; }
.g-place .sel .ic { margin-right: 3px; }
.caret.solo { margin: 0 -5px 0 -3px; }
.tb-pt { gap: 1px; margin-left: 2px; }

.cad { display: block; width: 1576px; height: 304px; flex: none; }
.axisnum { font: 18px "Liberation Sans", sans-serif; fill: #fff; }
.axislabel { font: 12px "Liberation Sans", sans-serif; }

.statusrow { height: 35px; padding: 3px 0 9px 1px; display: flex; flex: none; }
.g-s1 { width: 209px; gap: 5px; }
.g-s1 .grip { margin-right: 1px; }
.g-s1 .tb { gap: 3px; margin-right: -1px; }
.g-s1 .tbtn { width: 75px; padding: 0 2px; gap: 4px; }
.g-s1 .tbtn + .tbtn { margin-left: -5px; }
.g-s2 { width: 160px; margin-left: 2px; gap: 3px; }
.g-s2 .grip { margin-right: 1px; margin-left: 4px; }
.g-s2 .tbtn { width: 50px; gap: 4px; padding: 0 2px; }
.g-s2 .tbtn:last-child { width: 60px; }

.lower { flex: 1; display: flex; min-height: 0; }
.gutter { width: 13px; flex: none; }
.gutter-ic { display: block; width: 10px; height: 10px; margin-left: 1px; }
.dots { height: 520px; width: 8px; margin: 0 0 0 2px; background: radial-gradient(circle, #b9b9b9 .9px, transparent 1.100px) 0 0 / 4px 5px; }
.lowermain { flex: 1; min-width: 0; display: flex; flex-direction: column; }
.navrow { height: 26px; flex: none; }
.g-nav { width: 350px; padding-left: 4px; gap: 10px; height: 25px; }
.g-nav .sep { margin: 0 -3px 0 -4px; }
.g-nav .tb { gap: 2px; margin-left: -3px; }
.g-nav .tb-ins { margin-left: -2px; }
.g-nav .tb-scale { margin-left: -1px; }

.tablearea { flex: 1; background: #fff; position: relative; overflow: hidden; }
table { border-collapse: separate; border-spacing: 0; table-layout: fixed; }
.rebar { width: 1361px; }
.w33 { width: 33px; } .w73 { width: 73px; } .w56 { width: 56px; } .w36 { width: 36px; } .w742 { width: 742px; }
.w49 { width: 49px; } .w61 { width: 61px; } .w71 { width: 71px; } .w74 { width: 74px; }
.rebar th, .rebar td { border-right: 1px solid #bbb; border-bottom: 1px solid #bbb; padding: 2px 2px 0; overflow: hidden; white-space: nowrap; }
.rebar th { height: 19px; font-weight: 400; background: linear-gradient(#fff, #f0f0f0); text-align: center; padding: 1px 0 0; }
th.hot { background: linear-gradient(#fbd794, #f0bd68) !important; color: #6f0a6f; }
.rebar tbody td { background: #caffd4; }
.r29 td { height: 29px; }
.r34 td { height: 34px; }
.r20 td { height: 20px; }
.rebar tbody .empty td { background: #fff; }
.rebar tbody td.no, .props td.no { background: linear-gradient(#fff, #ececec); text-align: center; padding: 1px 0 0; }
.rebar tbody td.no.cur, .props td.no.cur { background: #ffd38a; color: #6f0a6f; }
.rebar tbody td.bar { border-right: 1px solid #000; font-size: 12px; }
.rebar td.c { text-align: center; font-size: 10px; }
.rebar td.gr { padding: 0; }
.rebar tbody td.gr.sel { background: #aae8d2; }
.shape { display: block; width: 108px; height: 100%; min-height: 28px; }
.sl { fill: none; stroke: #000; stroke-width: 2; }
.rt { font: 10px "DejaVu Sans Mono", monospace; fill: #f00; }
.bt { font: 10px "DejaVu Sans Mono", monospace; fill: #000; }
.cornerarc { position: absolute; right: -14px; bottom: -14px; width: 20px; height: 58px; border: 2px solid #c5e08a; border-radius: 10px 0 0 0; background: #f3f8e0; }

.dialog { position: absolute; left: 481px; top: 110px; width: 632px; height: 940px; background: #fff; border-top: 2px solid #18bcc8; box-shadow: 0 0 14px rgba(0, 0, 0, .45); display: flex; flex-direction: column; }
.dlghead { height: 30px; flex: none; display: flex; align-items: center; justify-content: space-between; padding: 0 1px 2px 7px; font-size: 12px; border-bottom: 1px solid #aaa; }
.dlgclose { width: 18px; height: 19px; background: #c9504f; color: #fff; text-align: center; font: bold 10px/18px "DejaVu Sans", sans-serif; margin-top: 2px; }
.props { width: 627px; margin-left: 1px; flex: none; }
.p1 { width: 21px; } .p2 { width: 121px; } .p3 { width: 485px; }
.props th { height: 23px; font-weight: 400; padding: 1px 0 0; background: linear-gradient(#fff, #f0f0f0); border-right: 1px solid #bbb; border-bottom: 1px solid #bbb; }
.props td { height: 19px; border-right: 1px solid #bbb; border-bottom: 1px solid #bbb; padding: 2px 0 0; white-space: nowrap; overflow: hidden; }
.lab { padding-left: 21px !important; }
.val { padding-left: 3px !important; }
.blue { color: #0000ff; }
.gray { color: #808080; }
.selname { background: #0078d7; color: #fff; }
.cur .val { background: #d6e9f9; }
.tree-l { padding-left: 3px !important; }
.plus { display: inline-block; width: 12px; height: 12px; margin-right: 6px; vertical-align: -2px; border: 1px solid #aaa; background: linear-gradient(#111, #111) center / 8px 1px no-repeat, linear-gradient(#111, #111) center / 1px 8px no-repeat; }
.dlgspace { height: 39px; flex: none; border-bottom: 1px solid #aaa; }
.dlgtools { height: 66px; flex: none; background: #f0f0f0; padding: 9px 0 0 3px; }
.dlgbar { height: 27px; width: 625px; background: #f6f6f6; display: flex; align-items: center; gap: 10px; border-top: 1px solid #e4e4e4; }
.dlgbar .grip { margin: 0 0 0 4px; }
.dlgbar .first { margin-left: -3px; }
.sep.flat { margin: 0 -3px; height: 16px; }
.dt { flex: none; white-space: nowrap; }
.dt.dis { color: #aaa; }
.dlginfo { height: 28px; display: flex; align-items: center; width: 198px; background: #f6f6f6; }
.dlginfo .grip { margin: 0 7px 0 4px; }
.infolab { color: #777; }
.infobox { width: 133px; height: 22px; border: 1px solid #808080; background: #f3f3f3; margin-left: 2px; display: flex; align-items: center; justify-content: flex-end; padding-right: 4px; }
.sectionview { flex: 1; border: 3px solid #f00; margin: 0 4px 0 5px; min-height: 0; overflow: hidden; background: #000; }
.section { display: block; width: 616px; height: 511px; }
.gridl { fill: none; stroke: #4a4a4a; stroke-dasharray: 8 3 2 3; }
.gridc { fill: none; stroke: #666; stroke-dasharray: 8 3 2 3; }
.gridt { font: 11px "Liberation Sans", sans-serif; fill: #555; }
.r3 { fill: none; stroke: #f00; stroke-width: 3; }
.r5 { fill: none; stroke: #f00; stroke-width: 5; }
.r6 { fill: none; stroke: #f00; stroke-width: 6; }
.whiteoutline { fill: none; stroke: #fff; stroke-width: 2; }
.dots-y circle { fill: none; stroke: #ff0; }
.dots-m circle { fill: none; stroke: #f0f; }
.dimg { fill: none; stroke: #0f0; }
.leader { stroke: #fff; fill: none; }
.dimt { font: 11px "Liberation Sans", sans-serif; fill: #fff; }
.dimcn { font: 12px "Noto Sans CJK SC", sans-serif; fill: #fff; }
.dimgreen { font: 11px "Liberation Sans", sans-serif; fill: #0f0; }
```
